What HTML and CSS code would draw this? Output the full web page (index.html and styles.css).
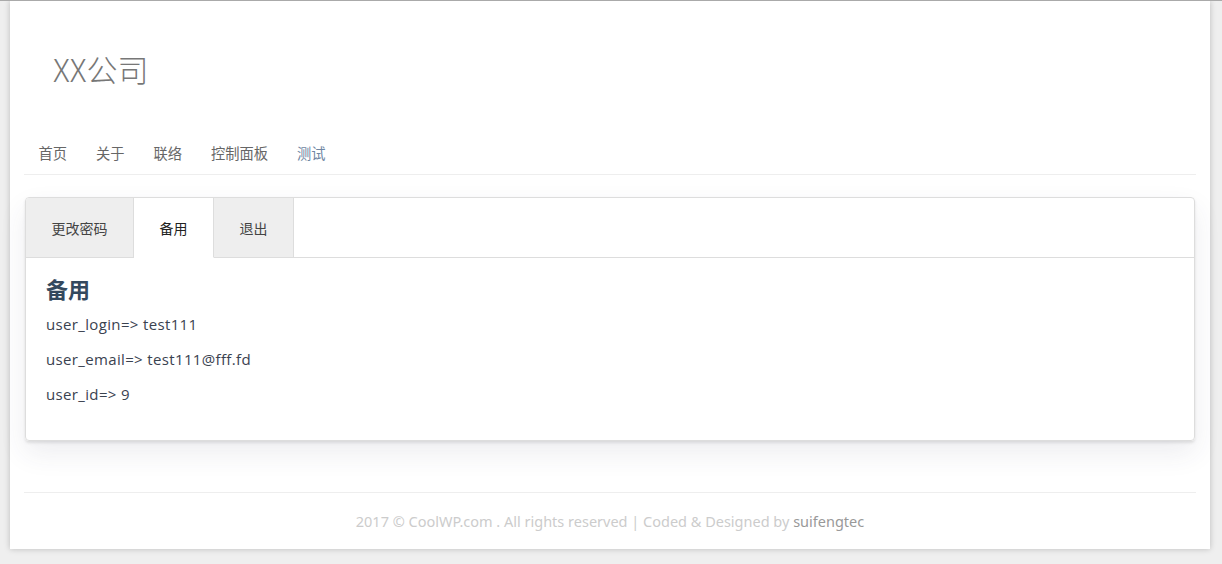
FILE: index.html
```html
<!DOCTYPE html>
<html lang="zh">
<head>
<meta charset="utf-8">
<title>XX公司</title>
<link rel="stylesheet" href="styles.css">
</head>
<body>
<div class="page">
  <header class="site-header">
    <div class="logo">XX公司</div>
    <nav class="nav">
      <a class="nav-item">首页</a>
      <a class="nav-item">关于</a>
      <a class="nav-item">联络</a>
      <a class="nav-item">控制面板</a>
      <a class="nav-item nav-item-current">测试</a>
    </nav>
  </header>
  <section class="card">
    <div class="tabs">
      <div class="tab">更改密码</div>
      <div class="tab active">备用</div>
      <div class="tab">退出</div>
      <div class="tab-fill"></div>
    </div>
    <div class="tab-body">
      <h2 class="title">备用</h2>
      <p class="row">user_login=&gt; test111</p>
      <p class="row">user_email=&gt; test111@fff.fd</p>
      <p class="row">user_id=&gt; 9</p>
    </div>
  </section>
  <footer class="footer">2017 © CoolWP.com . All rights reserved | Coded &amp; Designed by <span class="author">suifengtec</span></footer>
</div>
</body>
</html>
```
FILE: styles.css
```css
html, body {
  margin: 0;
  padding: 0;
}
body {
  background: #efefef;
  border-top: 1px solid #aaa;
  font-family: "Open Sans", "Noto Sans CJK SC", sans-serif;
  font-size: 14px;
  color: #444;
  height: 563px;
}
.page {
  margin: 0 12px 0 10px;
  background: #fff;
  box-shadow: 0 0 6px rgba(0,0,0,0.22);
  padding: 0 14px 0 14px;
}
.site-header {
  padding-top: 48px;
}
.logo {
  font-family: "Noto Sans CJK SC", sans-serif;
  font-weight: 300;
  font-size: 31px;
  line-height: 40px;
  color: #777;
  padding-left: 29px;
  margin-bottom: 43px;
}
.nav {
  display: flex;
  height: 43px;
  align-items: center;
  padding: 1px 0 2px;
  box-sizing: border-box;
  border-bottom: 1px solid #eee;
}
.nav-item {
  font-family: "Noto Sans CJK SC", sans-serif;
  padding: 0 14.5px;
  color: #666;
  font-size: 14.25px;
}
.nav-item-current {
  color: #6f86a3;
}
.card {
  margin: 22px 1px 0;
  border: 1px solid #ddd;
  border-radius: 4px;
  box-shadow: 0 12px 28px rgba(50,50,93,0.09), 0 2px 3px rgba(0,0,0,0.1);
  overflow: hidden;
}
.tabs {
  display: flex;
  height: 60px;
}
.tab {
  font-family: "Noto Sans CJK SC", sans-serif;
  display: flex;
  align-items: center;
  padding: 0 25.5px;
  background: #eee;
  border-right: 1px solid #ddd;
  border-bottom: 1px solid #ddd;
  color: #444;
}
.tab.active {
  background: #fff;
  border-bottom-color: #fff;
  color: #222;
}
.tab-fill {
  flex: 1;
  border-bottom: 1px solid #ddd;
}
.tab-body {
  padding: 14px 20px 21px;
}
.title {
  font-family: "Noto Sans CJK SC", sans-serif;
  margin: 0 0 9px;
  font-size: 22px;
  line-height: 33px;
  font-weight: 700;
  color: #34495e;
}
.row {
  font-family: "Open Sans", sans-serif;
  font-size: 15px;
  letter-spacing: 0.35px;
  margin: 0 0 15px;
  line-height: 20px;
  color: #3a4250;
}
.footer {
  margin-top: 51px;
  border-top: 1px solid #eee;
  padding: 18px 0 18px;
  line-height: 20px;
  text-align: center;
  font-family: "Noto Sans", sans-serif;
  font-size: 14.5px;
  color: #ccc;
}
.author {
  color: #999;
}
```
